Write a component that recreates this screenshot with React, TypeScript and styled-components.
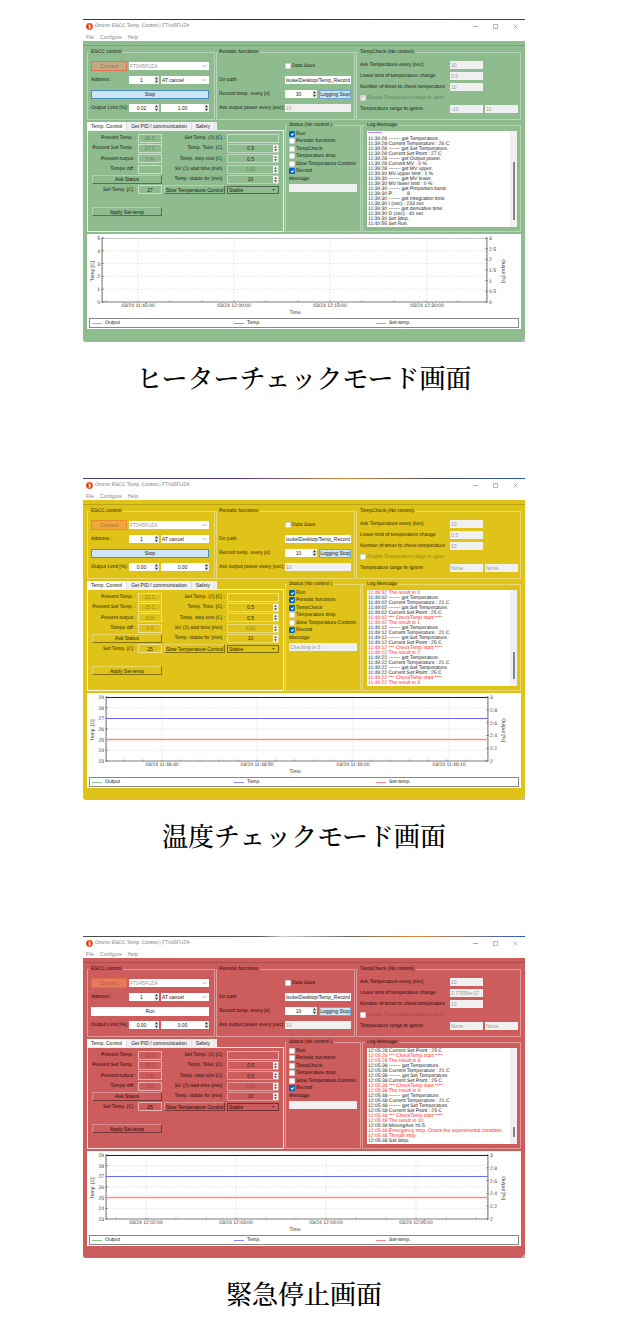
import React from "react";
import styled, { createGlobalStyle, ThemeProvider } from "styled-components";

type Tone = {
  base: string;
  edge: string;
  ink: string;
  faint: string;
  connect: string;
  connectEdge: string;
};

type LogLine = { text: string; tone?: "alert" | "link" };

type Screen = {
  id: string;
  caption: string;
  tone: Tone;
  skyline: string;
  running: boolean;
  limitLow: string;
  limitHigh: string;
  recordEvery: string;
  lowerLimit: string;
  rangeEnabled: boolean;
  rangeFrom: string;
  rangeTo: string;
  present: string[];
  setTemp: string;
  status: boolean[];
  message: string;
  log: LogLine[];
  thumb: number;
  footer: number;
  chart: ChartData;
};

type ChartData = {
  left: number;
  right: number;
  topEdge: string;
  yLeft: string[];
  yRight: string[];
  xTicks: { x: number; label: string }[];
  minor: number;
  temp?: number;
  setTemp?: number;
  unit: string;
};

const GlobalStyle = createGlobalStyle`
  *, *::before, *::after { box-sizing: border-box; }
  body { margin: 0; background: #fff; }
  button, input, select {
    font: inherit; color: inherit; margin: 0; padding: 0; min-width: 0; border-radius: 0;
  }
`;

const Page = styled.main`
  padding: 19px 103px 10px 83px;
`;

const Section = styled.figure`
  margin: 0;
`;

const Caption = styled.figcaption`
  padding: 15px 0 81px;
  font: 500 26px/40px "Noto Serif CJK JP", "Noto Serif JP", "Noto Sans CJK JP", serif;
  text-align: center;
  color: #000;
`;

const Window = styled.article`
  background: ${(p) => p.theme.base};
  color: ${(p) => p.theme.ink};
  font: 5px/6px "Liberation Sans", Arial, sans-serif;
  text-rendering: geometricPrecision;
  white-space: nowrap;
  border-radius: 0 0 3px 3px;
`;

const Skyline = styled.div<{ $fill: string }>`
  height: 1px;
  background: ${(p) => p.$fill};
`;

const TitleBar = styled.header`
  display: flex;
  align-items: center;
  gap: 2px;
  height: 12px;
  padding: 0 6px 0 3px;
  background: #fff;
  color: #777;
`;

const Title = styled.h2`
  flex: 1;
  margin: 0;
  font: inherit;
`;

const WindowButton = styled.button`
  display: flex;
  width: 8px;
  height: 8px;
  margin-left: 10px;
  align-items: center;
  justify-content: center;
  border: 0;
  background: none;
`;

const MenuBar = styled.nav`
  display: flex;
  gap: 6px;
  height: 9px;
  padding: 1px 3px 0;
  background: #fff;
  color: #888;
`;

const MenuItem = styled.button`
  border: 0;
  background: none;
  line-height: 7px;
`;

const ToolStrip = styled.div`
  height: 8px;
  border-top: 4px solid ${(p) => p.theme.base};
  box-shadow: inset 0 1px ${(p) => p.theme.edge};
`;

const Body = styled.div`
  display: grid;
  gap: 2px;
  padding: 0 4px;
`;

const TopRow = styled.div`
  display: grid;
  grid-template-columns: 128fr 139fr 165fr;
  gap: 1px;
`;

const BottomRow = styled.div`
  display: grid;
  grid-template-columns: 197fr 76fr 159fr;
  gap: 1px;
  height: 110px;
`;

const Group = styled.fieldset<{ $pad: string }>`
  min-width: 0;
  margin: 0;
  padding: ${(p) => p.$pad};
  border: 1px solid rgba(255, 255, 255, 0.38);
`;

const Legend = styled.legend`
  padding: 0 2px;
  margin-left: -2px;
  line-height: 6px;
`;

const FormRow = styled.div<{ $cols: string }>`
  display: grid;
  grid-template-columns: ${(p) => p.$cols};
  align-items: center;
  column-gap: 2px;
  height: 14px;
`;

const CheckRows = styled.div`
  display: grid;
  grid-template-rows: repeat(5, 1fr);
  height: 56px;
`;

const CheckRow = styled.div`
  display: grid;
  grid-template-columns: 88px 33px 33px;
  gap: 2px;
  align-items: center;
`;

const Label = styled.label<{ $right?: boolean }>`
  display: block;
  justify-self: ${(p) => (p.$right ? "end" : "start")};
`;

const Field = styled.input<{ $off?: boolean }>`
  width: 100%;
  height: 8px;
  padding: 0 1px;
  border: 0;
  background: ${(p) => (p.$off ? "#f0f0f0" : "#fff")};
  color: ${(p) => (p.$off ? "#999" : "#222")};
`;

const PlainField = styled.input<{ $faint?: boolean }>`
  width: 100%;
  height: 9px;
  border: 1px solid rgba(255, 255, 255, 0.5);
  background: transparent;
  text-align: center;
  color: ${(p) => (p.$faint ? p.theme.faint : "inherit")};
`;

const SpinBox = styled.span<{ $plain?: boolean }>`
  display: flex;
  height: ${(p) => (p.$plain ? 9 : 8)}px;
  border: ${(p) => (p.$plain ? "1px solid rgba(255,255,255,0.38)" : "0")};
  background: ${(p) => (p.$plain ? "transparent" : "#fff")};
`;

const SpinInput = styled.input<{ $faint?: boolean }>`
  flex: 1;
  width: 100%;
  border: 0;
  background: none;
  text-align: center;
  color: ${(p) => (p.$faint ? p.theme.faint : "#222")};
`;

const SpinArrows = styled.svg`
  width: 5px;
  height: 100%;
  background: #f0f0f0;
`;

const SelectBox = styled.span<{ $plain?: boolean }>`
  display: flex;
  position: relative;
  height: 8px;
  background: ${(p) => (p.$plain ? "transparent" : "#fff")};
  border: ${(p) => (p.$plain ? "1px solid rgba(0,0,0,0.45)" : "0")};
`;

const Select = styled.select<{ $faint?: boolean }>`
  appearance: none;
  width: 100%;
  padding-left: 1px;
  border: 0;
  background: none;
  line-height: 6px;
  color: ${(p) => (p.$faint ? "#999" : "inherit")};
  opacity: 1;
`;

const Chevron = styled.svg`
  position: absolute;
  right: 2px;
  top: 0;
  width: 5px;
  height: 100%;
  pointer-events: none;
`;

const ConnectButton = styled.button`
  height: 10px;
  border: 1px solid ${(p) => p.theme.connectEdge};
  background: ${(p) => p.theme.connect};
  color: rgba(90, 60, 30, 0.55);
`;

const WideButton = styled.button<{ $active: boolean }>`
  width: 100%;
  height: 9px;
  border: 1px solid ${(p) => (p.$active ? "#4a8fc8" : "#fff")};
  background: ${(p) => (p.$active ? "#cce4f7" : "#fff")};
  color: #222;
`;

const LoggingButton = styled.button`
  height: 9px;
  border: 1px solid #6ba6d6;
  background: #cce4f7;
  color: #222;
`;

const FlatButton = styled.button`
  width: 100%;
  height: 9px;
  border: 1px solid;
  border-color: rgba(255, 255, 255, 0.3) rgba(0, 0, 0, 0.4) rgba(0, 0, 0, 0.4) rgba(255, 255, 255, 0.3);
  background: transparent;
`;

const CheckLabel = styled.label<{ $faint?: boolean }>`
  display: flex;
  align-items: center;
  gap: 1px;
  color: ${(p) => (p.$faint ? p.theme.faint : "inherit")};
`;

const CheckBox = styled.input`
  appearance: none;
  display: grid;
  place-items: center;
  flex: none;
  width: 6px;
  height: 6px;
  border: 1px solid rgba(120, 120, 120, 0.35);
  border-radius: 1px;
  background: #fff;
  &:checked { background: #0067c0; border-color: #0067c0; }
  &:checked::after {
    content: "";
    width: 3px;
    height: 2px;
    border: solid #fff;
    border-width: 0 0 1px 1px;
    transform: rotate(-45deg);
  }
  &:checked:disabled { background: #d4d4d4; border-color: #d4d4d4; }
`;

const Tabs = styled.div`
  display: flex;
  width: 130px;
  height: 8px;
  background: #f0f0f0;
`;

const Tab = styled.button<{ $on?: boolean }>`
  padding: 0 4px;
  border: 0;
  border-right: 1px solid #ddd;
  background: ${(p) => (p.$on ? "#fff" : "transparent")};
  color: #222;
`;

const Pane = styled.div`
  height: 102px;
  padding: 2px 4px 0 1px;
  border: 1px solid rgba(255, 255, 255, 0.85);
`;

const PaneGrid = styled.div`
  display: grid;
  grid-template-columns: 47px 24px 61px minmax(0, 1fr);
  grid-template-rows: repeat(6, 1fr);
  column-gap: 2px;
  align-items: center;
  height: 62px;
`;

const AskCell = styled.div`
  grid-column: span 2;
  padding-left: 3px;
`;

const ApplyCell = styled.div`
  width: 73px;
  padding: 12px 0 0 3px;
`;

const StatusList = styled.div`
  display: grid;
  grid-template-rows: repeat(6, 1fr);
  height: 45px;
`;

const MessageLabel = styled.label`
  display: grid;
  gap: 1px;
  padding-top: 1px;
  line-height: 7px;
`;

const LogBox = styled.div`
  display: flex;
  height: 96px;
  overflow: hidden;
  background: #fff;
`;

const LogLines = styled.div`
  display: flex;
  flex: 1;
  flex-direction: column;
  justify-content: flex-end;
  min-width: 0;
  overflow: hidden;
  padding-left: 1px;
`;

const LogText = styled.div<{ $tone?: string }>`
  flex: none;
  height: 5px;
  line-height: 5px;
  white-space: pre;
  color: ${(p) => (p.$tone === "alert" ? "#f22" : p.$tone === "link" ? "#22f" : "#222")};
`;

const ScrollTrack = styled.div`
  display: flex;
  align-items: flex-end;
  justify-content: center;
  width: 7px;
  padding-bottom: 7px;
  background: #f0f0f0;
`;

const ScrollThumb = styled.div<{ $size: number }>`
  width: 2px;
  height: ${(p) => p.$size}px;
  background: #858585;
`;

const ChartPanel = styled.div`
  background: #fff;
  padding: 0 2px 1px;
`;

const Plot = styled.svg`
  display: block;
  width: 100%;
  height: auto;
  font-size: 5px;
`;

const SeriesKey = styled.ul`
  display: grid;
  grid-template-columns: repeat(3, 1fr);
  height: 10px;
  margin: 0;
  padding: 0 0 0 2px;
  border: 1px solid #888;
  list-style: none;
  color: #222;
`;

const SeriesItem = styled.li<{ $line: string }>`
  display: flex;
  align-items: center;
  gap: 3px;
  &::before {
    content: "";
    width: 10px;
    border-top: 1px solid ${(p) => p.$line};
  }
`;

const Footer = styled.footer<{ $height: number }>`
  display: flex;
  align-items: flex-end;
  justify-content: flex-end;
  height: ${(p) => p.$height}px;
`;

const arrows = (
  <SpinArrows viewBox="0 0 5 8" aria-hidden="true">
    <path d="M2.5 1 4 3.2H1zM2.5 7 4 4.8H1z" fill="#333" />
  </SpinArrows>
);

function Spin(props: { id?: string; label?: string; value: string; plain?: boolean; faint?: boolean }) {
  return (
    <SpinBox $plain={props.plain}>
      <SpinInput
        id={props.id}
        aria-label={props.label}
        defaultValue={props.value}
        inputMode="decimal"
        disabled={props.faint}
        $faint={props.faint}
      />
      {arrows}
    </SpinBox>
  );
}

function Pick(props: { label: string; value: string; plain?: boolean; faint?: boolean }) {
  return (
    <SelectBox $plain={props.plain}>
      <Select aria-label={props.label} disabled={props.faint} $faint={props.faint}>
        <option>{props.value}</option>
      </Select>
      <Chevron viewBox="0 0 5 8" aria-hidden="true">
        {props.plain ? (
          <path d="M1 3h3L2.5 5z" fill="#222" />
        ) : (
          <path d="M.5 3 2.5 5l2-2" fill="none" stroke="#888" strokeWidth=".6" />
        )}
      </Chevron>
    </SelectBox>
  );
}

const PLOT_TOP = 4;
const PLOT_BOTTOM = 68;

function Chart({ data }: { data: ChartData }) {
  const { left, right } = data;
  const span = PLOT_BOTTOM - PLOT_TOP;
  const at = (i: number, n: number) => PLOT_TOP + (span * i) / (n - 1);
  const nl = data.yLeft.length;
  const nr = data.yRight.length;
  const step = data.minor;
  const minors: number[] = [];
  for (let x = data.xTicks[0].x; x > left; x -= step) minors.push(x);
  for (let x = data.xTicks[0].x + step; x < right; x += step) minors.push(x);
  const fine = Array.from({ length: 31 }, (_, i) => PLOT_TOP + (span * i) / 30);
  return (
    <Plot viewBox="0 0 430 84" fill="#333" role="img" aria-label="Temperature and output over time">
      <g stroke="#d4d4d4" strokeWidth=".6" strokeDasharray="1.5 1.5">
        {data.yLeft.map((l, i) => <path key={l} d={`M${left} ${at(i, nl)}H${right}`} />)}
        {data.xTicks.map((t) => <path key={t.label} d={`M${t.x} ${PLOT_TOP}V${PLOT_BOTTOM}`} />)}
      </g>
      <path d={`M${left} ${PLOT_TOP + 0.5}H${right}`} stroke={data.topEdge} />
      <path
        d={`M${left} ${PLOT_TOP}V${PLOT_BOTTOM}H${right}V${PLOT_TOP}`}
        fill="none"
        stroke="#666"
        strokeWidth=".8"
      />
      <g stroke="#555" strokeWidth=".5">
        {fine.map((y) => <path key={y} d={`M${left} ${y}h1M${right} ${y}h-1`} />)}
        {data.yLeft.map((l, i) => <path key={l} d={`M${left - 1} ${at(i, nl)}h3`} />)}
        {data.yRight.map((l, i) => <path key={l} d={`M${right - 2} ${at(i, nr)}h3`} />)}
        {minors.map((x) => <path key={x} d={`M${x} ${PLOT_BOTTOM}v-1.5`} />)}
      </g>
      {data.temp !== undefined && (
        <path d={`M${left} ${data.temp}H${right}`} stroke="#6a6aff" />
      )}
      {data.setTemp !== undefined && (
        <path d={`M${left} ${data.setTemp}H${right}`} stroke="#ff8c8c" strokeWidth="1.3" />
      )}
      {data.yLeft.map((l, i) => (
        <text key={l} x={left - 2} y={at(i, nl) + 2} textAnchor="end">{l}</text>
      ))}
      {data.yRight.map((l, i) => (
        <text key={l} x={right + 2} y={at(i, nr) + 2}>{l}</text>
      ))}
      {data.xTicks.map((t) => (
        <text key={t.label} x={t.x} y="73" textAnchor="middle">{t.label}</text>
      ))}
      <text x="206" y="80" textAnchor="middle">Time</text>
      <text transform="translate(5 37) rotate(-90)" textAnchor="middle">{data.unit}</text>
      <text transform="translate(413 37) rotate(90)" textAnchor="middle">Output [%]</text>
    </Plot>
  );
}

const statusNames = [
  "Run",
  "Periodic functions",
  "TempCheck",
  "Temperature drop",
  "Slow Temperature Controls",
  "Record",
];

const presentNames = ["Present Temp. :", "Present Set Temp. :", "Present output :", "Tempe diff :"];

function EsccGroup({ s }: { s: Screen }) {
  const cols = "36px minmax(0, 1fr)";
  const split = "36px 30px minmax(0, 1fr)";
  return (
    <Group $pad="4px 5px 4px 3px">
      <Legend>ESCC control</Legend>
      <FormRow $cols={cols}>
        <ConnectButton type="button" disabled>Connect</ConnectButton>
        <Pick label="Port" value="FT045FUZA" faint />
      </FormRow>
      <FormRow $cols={split}>
        <Label htmlFor={`${s.id}-address`}>Address :</Label>
        <Spin id={`${s.id}-address`} value="1" />
        <Pick label="Auto tuning" value="AT cancel" />
      </FormRow>
      <FormRow $cols="minmax(0, 1fr)">
        <WideButton type="button" $active={s.running}>{s.running ? "Stop" : "Run"}</WideButton>
      </FormRow>
      <FormRow $cols={split}>
        <Label htmlFor={`${s.id}-limit`}>Output Limit [%]:</Label>
        <Spin id={`${s.id}-limit`} value={s.limitLow} />
        <Spin label="Upper output limit" value={s.limitHigh} />
      </FormRow>
    </Group>
  );
}

function PeriodicGroup({ s }: { s: Screen }) {
  const cols = "64px minmax(0, 1fr)";
  return (
    <Group $pad="4px 3px 4px 2px">
      <Legend>Periodic functions</Legend>
      <FormRow $cols={cols}>
        <span />
        <CheckLabel><CheckBox type="checkbox" />Data Save</CheckLabel>
      </FormRow>
      <FormRow $cols={cols}>
        <Label htmlFor={`${s.id}-dir`}>Dir path</Label>
        <Field id={`${s.id}-dir`} defaultValue="isuke/Desktop/Temp_Record" />
      </FormRow>
      <FormRow $cols="64px 32px minmax(0, 1fr)">
        <Label htmlFor={`${s.id}-record`}>Record temp. every [s]:</Label>
        <Spin id={`${s.id}-record`} value={s.recordEvery} />
        <LoggingButton type="button">Logging Stop</LoggingButton>
      </FormRow>
      <FormRow $cols={cols}>
        <Label htmlFor={`${s.id}-ask`}>Ask output power every [sec]:</Label>
        <Field id={`${s.id}-ask`} defaultValue="10" disabled $off />
      </FormRow>
    </Group>
  );
}

function TempCheckGroup({ s }: { s: Screen }) {
  const rows = [
    ["every", "Ask Temperature every [sec]", "10"],
    ["lower", "Lower limit of temperature change", s.lowerLimit],
    ["times", "Number of times to check temperature", "10"],
  ];
  return (
    <Group $pad="4px 3px">
      <Legend>TempCheck (No control)</Legend>
      <CheckRows>
        {rows.map(([key, name, value]) => (
          <CheckRow key={key}>
            <Label htmlFor={`${s.id}-${key}`}>{name}</Label>
            <Field id={`${s.id}-${key}`} defaultValue={value} disabled $off />
          </CheckRow>
        ))}
        <CheckLabel $faint>
          <CheckBox type="checkbox" defaultChecked={s.rangeEnabled} disabled />
          Enable Temperature range to ignor
        </CheckLabel>
        <CheckRow>
          <Label htmlFor={`${s.id}-from`}>Temperature range to ignore</Label>
          <Field id={`${s.id}-from`} defaultValue={s.rangeFrom} disabled $off />
          <Field aria-label="Upper end of range" defaultValue={s.rangeTo} disabled $off />
        </CheckRow>
      </CheckRows>
    </Group>
  );
}

function ControlPane({ s }: { s: Screen }) {
  const right = [
    ["Temp. Toler. [C] :", "0.5"],
    ["Temp. step size [C] :", "0.5"],
    ["SV (2) wait time [min] :", "0.00"],
    ["Temp. stable for [min] :", "10"],
  ];
  const present = (i: number) => (
    <>
      <Label $right htmlFor={`${s.id}-p${i}`}>{presentNames[i]}</Label>
      <PlainField id={`${s.id}-p${i}`} defaultValue={s.present[i]} disabled $faint />
    </>
  );
  const setting = (i: number) => (
    <>
      <Label $right htmlFor={`${s.id}-s${i}`}>{right[i][0]}</Label>
      <Spin id={`${s.id}-s${i}`} value={right[i][1]} plain faint={i === 2} />
    </>
  );
  return (
    <div>
      <Tabs role="tablist">
        <Tab role="tab" type="button" aria-selected $on>Temp. Control</Tab>
        <Tab role="tab" type="button">Get PID / communication</Tab>
        <Tab role="tab" type="button">Safety</Tab>
      </Tabs>
      <Pane role="tabpanel">
        <PaneGrid>
          {present(0)}
          <Label $right htmlFor={`${s.id}-set2`}>Set Temp. (2) [C] :</Label>
          <PlainField id={`${s.id}-set2`} />
          {present(1)}
          {setting(0)}
          {present(2)}
          {setting(1)}
          {present(3)}
          {setting(2)}
          <AskCell><FlatButton type="button">Ask Status</FlatButton></AskCell>
          {setting(3)}
          <Label $right htmlFor={`${s.id}-set`}>Set Temp. [C] :</Label>
          <PlainField id={`${s.id}-set`} defaultValue={s.setTemp} />
          <FlatButton type="button">Slow Temperature Control</FlatButton>
          <Pick label="Control mode" value="Stable" plain />
        </PaneGrid>
        <ApplyCell><FlatButton type="button">Apply Set-temp</FlatButton></ApplyCell>
      </Pane>
    </div>
  );
}

function AppWindow({ s }: { s: Screen }) {
  return (
    <ThemeProvider theme={s.tone}>
      <Window>
        <Skyline $fill={s.skyline} />
        <TitleBar>
          <svg width="7" height="7" viewBox="0 0 7 7" aria-hidden="true">
            <circle cx="3.5" cy="3.5" r="3.4" fill="#e2562c" />
            <path d="M3.7 1c-1 .8-1.3 2-.6 3 .3.6.1 1.3-.5 1.9 1.3-.1 2.1-1 2-2-.1-.8-.9-1.5-.9-2.9z" fill="#fff" />
            <path d="M1.4 2c-.5 1-.4 2.3.3 3.2" fill="none" stroke="#7a2a18" strokeWidth=".6" />
          </svg>
          <Title>Omron ESCC Temp. Control | FT045FUZA</Title>
          <WindowButton type="button" aria-label="Minimize">
            <svg width="5" height="5"><path d="M0 2.5h5" stroke="#888" strokeWidth=".7" /></svg>
          </WindowButton>
          <WindowButton type="button" aria-label="Maximize">
            <svg width="5" height="5"><path d="M.5.5h4v4h-4z" fill="none" stroke="#888" strokeWidth=".6" /></svg>
          </WindowButton>
          <WindowButton type="button" aria-label="Close">
            <svg width="5" height="5"><path d="M.5.5l4 4m0-4l-4 4" stroke="#888" strokeWidth=".6" /></svg>
          </WindowButton>
        </TitleBar>
        <MenuBar>
          <MenuItem type="button">File</MenuItem>
          <MenuItem type="button">Configure</MenuItem>
          <MenuItem type="button">Help</MenuItem>
        </MenuBar>
        <ToolStrip />
        <Body>
          <TopRow>
            <EsccGroup s={s} />
            <PeriodicGroup s={s} />
            <TempCheckGroup s={s} />
          </TopRow>
          <BottomRow>
            <ControlPane s={s} />
            <Group $pad="2px 3px 0">
              <Legend>Status (No control )</Legend>
              <StatusList>
                {statusNames.map((name, i) => (
                  <CheckLabel key={name}>
                    <CheckBox type="checkbox" defaultChecked={s.status[i]} />
                    {name}
                  </CheckLabel>
                ))}
              </StatusList>
              <MessageLabel>
                Message
                <Field defaultValue={s.message} readOnly $off />
              </MessageLabel>
            </Group>
            <Group $pad="3px 3px 0 4px">
              <Legend>Log Message</Legend>
              <LogBox>
                <LogLines>
                  {s.log.map((l, i) => <LogText key={i} $tone={l.tone}>{l.text}</LogText>)}
                </LogLines>
                <ScrollTrack><ScrollThumb $size={s.thumb} /></ScrollTrack>
              </LogBox>
            </Group>
          </BottomRow>
          <ChartPanel>
            <Chart data={s.chart} />
            <SeriesKey>
              <SeriesItem $line="#8c8">Output</SeriesItem>
              <SeriesItem $line="#88f">Temp.</SeriesItem>
              <SeriesItem $line="#f88">Set-temp.</SeriesItem>
            </SeriesKey>
          </ChartPanel>
        </Body>
        <Footer $height={s.footer}>
          <svg width="4" height="4" aria-hidden="true"><path d="M4 0v4H0z" fill="#bbb" /></svg>
        </Footer>
      </Window>
    </ThemeProvider>
  );
}

const plain = (...items: string[]): LogLine[] => items.map((text) => ({ text }));
const alert = (...items: string[]): LogLine[] => items.map((text) => ({ text, tone: "alert" }));

const cycle = (time: string, n: number): LogLine[] => [
  ...plain(
    `${time} ------- get Temperature.`,
    `${time} Current Temperature : 21 C`,
    `${time} ------- get Set Temperature.`,
    `${time} Current Set Point : 25 C`
  ),
  ...alert(`${time} *** CheckTemp start ****`, `${time} The result in ${n}`),
];

const compactAxis = ["29", "28", "27", "26", "25", "24", "23"];
const outputAxis = ["3", "2.8", "2.6", "2.4", "2.2", "2"];

const screens: Screen[] = [
  {
    id: "heater",
    caption: "ヒーターチェックモード画面",
    tone: {
      base: "#8fbc8f", edge: "#7da57d", ink: "#101a10", faint: "#5f835f",
      connect: "#c4a981", connectEdge: "#e8744f",
    },
    skyline: "linear-gradient(90deg, #35306a, #2b2f4c 40%, #28505e)",
    running: true,
    limitLow: "0.02",
    limitHigh: "1.00",
    recordEvery: "30",
    lowerLimit: "0.5",
    rangeEnabled: true,
    rangeFrom: "-10",
    rangeTo: "10",
    present: ["26 C", "27 C", "0 %", ""],
    setTemp: "27",
    status: [true, false, false, false, false, true],
    message: "",
    log: [
      { text: "*******", tone: "link" },
      ...plain(
        "11:39:28 ------- get Temperature.",
        "11:39:28 Current Temperature : 26 C",
        "11:39:28 ------- get Set Temperature.",
        "11:39:28 Current Set Point : 27 C",
        "11:39:28 ------- get Output power.",
        "11:39:28 Current MV : 0 %",
        "11:39:28 ------- get MV upper.",
        "11:39:30 MV upper limit : 1 %",
        "11:39:30 ------- get MV lower.",
        "11:39:30 MV lower limit : 0 %",
        "11:39:30 ------- get Proportion band.",
        "11:39:30 P :         8",
        "11:39:30 ------- get Integration time.",
        "11:39:30 I (sec) : 233 sec",
        "11:39:30 ------- get derivative time.",
        "11:39:30 D (sec) : 40 sec",
        "11:39:30 Set Stop.",
        "11:40:55 Set Run."
      ),
    ],
    thumb: 58,
    footer: 13,
    chart: {
      left: 13,
      right: 398,
      topEdge: "#ccc",
      yLeft: ["5", "4", "3", "2", "1", "0"],
      yRight: ["3", "2.5", "2", "1.5", "1", "0.5", "0"],
      xTicks: [
        { x: 49, label: "03/24 11:45:00" },
        { x: 145, label: "03/24 12:00:00" },
        { x: 241, label: "03/24 12:15:00" },
        { x: 338, label: "03/24 12:30:00" },
      ],
      minor: 32,
      unit: "Temp [C]",
    },
  },
  {
    id: "check",
    caption: "温度チェックモード画面",
    tone: {
      base: "#dfc319", edge: "#bba414", ink: "#2b2502", faint: "#96811a",
      connect: "#f0a63c", connectEdge: "#ea8a30",
    },
    skyline: "linear-gradient(90deg, #3a3f7c, #54388a 35%, #e08a3a 60%, #4a4a60 80%, #2a5cc0)",
    running: true,
    limitLow: "0.00",
    limitHigh: "0.00",
    recordEvery: "10",
    lowerLimit: "0.5",
    rangeEnabled: false,
    rangeFrom: "None.",
    rangeTo: "None.",
    present: ["21 C", "25 C", "0 %", "0.0"],
    setTemp: "25",
    status: [true, true, true, false, false, true],
    message: "Checking in 3",
    log: [
      ...alert("11:48:52 The result in 0"),
      ...cycle("11:49:02", 1),
      ...cycle("11:49:12", 2),
      ...cycle("11:49:22", 3),
    ],
    thumb: 27,
    footer: 12,
    chart: {
      left: 17,
      right: 399,
      topEdge: "#222",
      yLeft: compactAxis,
      yRight: outputAxis,
      xTicks: [
        { x: 73, label: "03/24 11:48:40" },
        { x: 168, label: "03/24 11:48:50" },
        { x: 264, label: "03/24 11:49:00" },
        { x: 360, label: "03/24 11:49:10" },
      ],
      minor: 19,
      temp: 25.5,
      setTemp: 46.5,
      unit: "Temp. [C]",
    },
  },
  {
    id: "stop",
    caption: "緊急停止画面",
    tone: {
      base: "#cd5c5c", edge: "#ac4d4d", ink: "#260808", faint: "#a04848",
      connect: "#e87a5c", connectEdge: "#dd6a4a",
    },
    skyline: "linear-gradient(90deg, #4a4a4a, #555 40%, #c8c8d8 45%, #666 60%, #dd8a3a 75%, #2a5cc0)",
    running: false,
    limitLow: "0.00",
    limitHigh: "0.00",
    recordEvery: "10",
    lowerLimit: "2.77556e-17",
    rangeEnabled: false,
    rangeFrom: "None.",
    rangeTo: "None.",
    present: ["21 C", "25 C", "0 %", "0.0"],
    setTemp: "25",
    status: [false, false, false, false, false, true],
    message: "",
    log: [
      ...plain("12:05:28 Current Set Point : 25 C"),
      ...alert("12:05:28 *** CheckTemp start ****", "12:05:28 The result in 8"),
      ...cycle("12:05:38", 9),
      ...cycle("12:05:48", 10),
      ...plain("12:05:48 MovingAve =0.5"),
      ...alert(
        "12:05:48 Emergency stop. Check the experimental condition.",
        "12:05:48 Thread stop"
      ),
      ...plain("12:05:48 Set Stop."),
    ],
    thumb: 10,
    footer: 12,
    chart: {
      left: 17,
      right: 399,
      topEdge: "#222",
      yLeft: compactAxis,
      yRight: outputAxis,
      xTicks: [
        { x: 57, label: "03/24 12:02:00" },
        { x: 147, label: "03/24 12:03:00" },
        { x: 237, label: "03/24 12:04:00" },
        { x: 327, label: "03/24 12:05:00" },
      ],
      minor: 30,
      temp: 25.5,
      setTemp: 46.5,
      unit: "Temp. [C]",
    },
  },
];

export default function App() {
  return (
    <>
      <GlobalStyle />
      <Page>
        {screens.map((s) => (
          <Section key={s.id}>
            <AppWindow s={s} />
            <Caption>{s.caption}</Caption>
          </Section>
        ))}
      </Page>
    </>
  );
}
